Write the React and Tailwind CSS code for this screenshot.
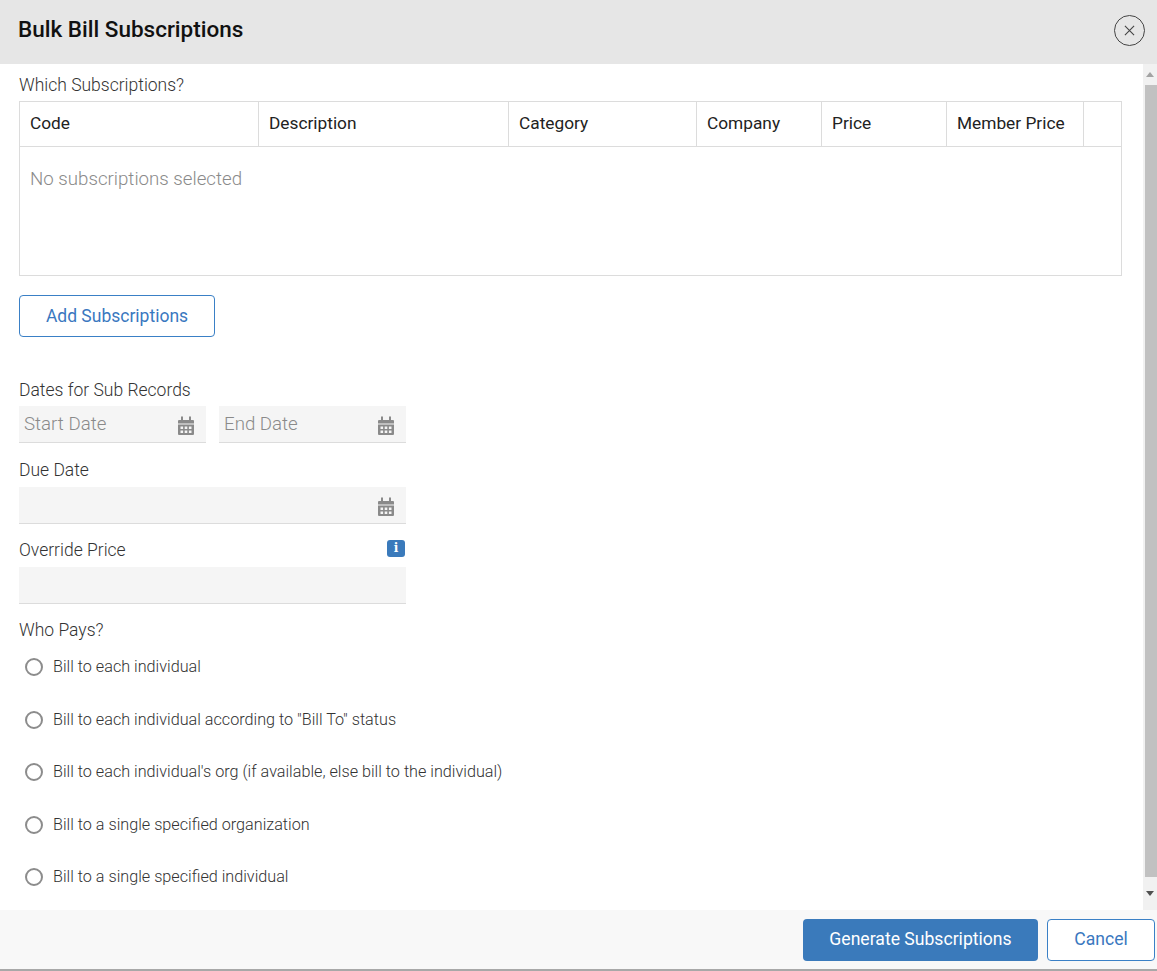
import { useState } from 'react';

const columns = [
  { label: 'Code', w: 'w-[239px]' },
  { label: 'Description', w: 'w-[250px]' },
  { label: 'Category', w: 'w-[188px]' },
  { label: 'Company', w: 'w-[125px]' },
  { label: 'Price', w: 'w-[125px]' },
  { label: 'Member Price', w: 'w-[137px]' },
  { label: '', w: 'flex-1' },
];

const payOptions = [
  'Bill to each individual',
  'Bill to each individual according to "Bill To" status',
  "Bill to each individual's org (if available, else bill to the individual)",
  'Bill to a single specified organization',
  'Bill to a single specified individual',
];

function CalendarIcon() {
  return (
    <svg viewBox="0 0 18 20" className="w-[18px] h-[20px] text-[#8a8a8a]" fill="currentColor">
      <rect x="4" y="0.5" width="2" height="4" />
      <rect x="12" y="0.5" width="2" height="4" />
      <path d="M1 5a1 1 0 0 1 1-1h14a1 1 0 0 1 1 1v2.5H1z" />
      <path d="M1 8.5h16v9.5a1 1 0 0 1-1 1H2a1 1 0 0 1-1-1zm2.5 2v2.6h2.6v-2.6zm4.2 0v2.6h2.6v-2.6zm4.2 0v2.6h2.6v-2.6zm-8.4 4v2.6h2.6v-2.6zm4.2 0v2.6h2.6v-2.6zm4.2 0v2.6h2.6v-2.6z" fillRule="evenodd" />
    </svg>
  );
}

function DateInput({ placeholder, width }) {
  return (
    <div className={`${width} h-[37px] bg-[#f5f5f5] border-b border-[#dcdcdc] flex items-center justify-between pl-[5px] pr-[11px]`}>
      <span className="text-[18.7px] font-light text-[#8a8a8a]">{placeholder}</span>
      <span className="mt-[4px]"><CalendarIcon /></span>
    </div>
  );
}

export default function App() {
  const [payer, setPayer] = useState(null);

  return (
    <div className="w-[1157px] h-[971px] flex flex-col bg-white font-['Roboto',sans-serif] text-[#222]">
      <div className="h-[64px] shrink-0 bg-[#e6e6e6] flex items-center justify-between pl-[18px] pr-[12px]">
        <h1 className="text-[22.5px] font-medium text-[#111] -mt-[4px]">Bulk Bill Subscriptions</h1>
        <button className="w-[31px] h-[31px] rounded-full border border-[#444] flex items-center justify-center -mt-[4px]">
          <svg viewBox="0 0 12 12" className="w-[11px] h-[11px]" stroke="#444" strokeWidth="1.2">
            <path d="M1 1l10 10M11 1L1 11" />
          </svg>
        </button>
      </div>

      <div className="flex-1 flex min-h-0">
        <div className="flex-1 pl-[19px] pr-[21px] pt-[11px]">
          <div className="text-[17.5px] font-light text-[#333] leading-[20px]">Which Subscriptions?</div>
          <div className="mt-[6px] border border-[#dcdcdc] h-[175px]">
            <div className="flex h-[45px] border-b border-[#dcdcdc]">
              {columns.map((c, i) => (
                <div
                  key={i}
                  className={`${c.w} flex items-center pl-[10px] text-[17.3px] text-[#222] ${i < columns.length - 1 ? 'border-r border-[#dcdcdc]' : ''}`}
                >
                  {c.label}
                </div>
              ))}
            </div>
            <div className="pl-[10px] pt-[18px] text-[18.7px] font-light text-[#8a8a8a]">No subscriptions selected</div>
          </div>

          <button className="mt-[19px] w-[196px] h-[42px] rounded-[4px] border border-[#3a80c6] text-[#3a78c0] text-[17.5px]">
            Add Subscriptions
          </button>

          <div className="mt-[43px] text-[17.5px] font-light text-[#333] leading-[20px]">Dates for Sub Records</div>
          <div className="mt-[6px] flex gap-[13px]">
            <DateInput placeholder="Start Date" width="w-[187px]" />
            <DateInput placeholder="End Date" width="w-[187px]" />
          </div>

          <div className="mt-[17px] text-[17.5px] font-light text-[#333] leading-[20px]">Due Date</div>
          <div className="mt-[7px]">
            <DateInput placeholder="" width="w-[387px]" />
          </div>

          <div className="mt-[16px] w-[387px] flex items-center justify-between">
            <span className="text-[17.5px] font-light text-[#333] leading-[20px]">Override Price</span>
            <span className="w-[18px] h-[17px] rounded-[3px] bg-[#3a7abb] text-white text-[12px] font-bold flex items-center justify-center -mt-[4px] mr-[1px] font-['DejaVu_Serif',serif]">i</span>
          </div>
          <div className="mt-[7px] w-[387px] h-[37px] bg-[#f5f5f5] border-b border-[#dcdcdc]" />

          <div className="mt-[16px] text-[17.5px] font-light text-[#333] leading-[20px]">Who Pays?</div>
          <div className="mt-[19px] flex flex-col">
            {payOptions.map((opt, i) => (
              <label key={i} className="h-[52.5px] flex items-start pl-[6px] gap-[10px] cursor-pointer">
                <span
                  onClick={() => setPayer(i)}
                  className="w-[18px] h-[18px] mt-[-1px] rounded-full border-2 border-[#8c8c8c] flex items-center justify-center"
                >
                  {payer === i && <span className="w-[8px] h-[8px] rounded-full bg-[#337ab7]" />}
                </span>
                <span className="text-[16.2px] font-light text-[#333] leading-[16px]">{opt}</span>
              </label>
            ))}
          </div>
        </div>

        <div className="w-[14px] bg-[#f1f1f1] flex flex-col items-center">
          <div className="h-[21px] flex items-center justify-center">
            <div className="w-0 h-0 border-l-[4px] border-r-[4px] border-b-[5px] border-l-transparent border-r-transparent border-b-[#a3a3a3]" />
          </div>
          <div className="w-[12px] ml-[1px] h-[792px] bg-[#c1c1c1]" />
          <div className="flex-1 flex items-center justify-center">
            <div className="w-0 h-0 border-l-[4px] border-r-[4px] border-t-[5px] border-l-transparent border-r-transparent border-t-[#505050]" />
          </div>
        </div>
      </div>

      <div className="h-[61px] shrink-0 bg-[#f8f8f8] border-b-2 border-[#a8a8a8] flex items-center justify-end gap-[9px] pr-[2px]">
        <button className="w-[235px] h-[42px] rounded-[4px] bg-[#3a7abb] text-white text-[17.6px]">Generate Subscriptions</button>
        <button className="w-[108px] h-[42px] rounded-[4px] border border-[#3a80c6] bg-white text-[#3a78c0] text-[17.6px]">Cancel</button>
      </div>
    </div>
  );
}
